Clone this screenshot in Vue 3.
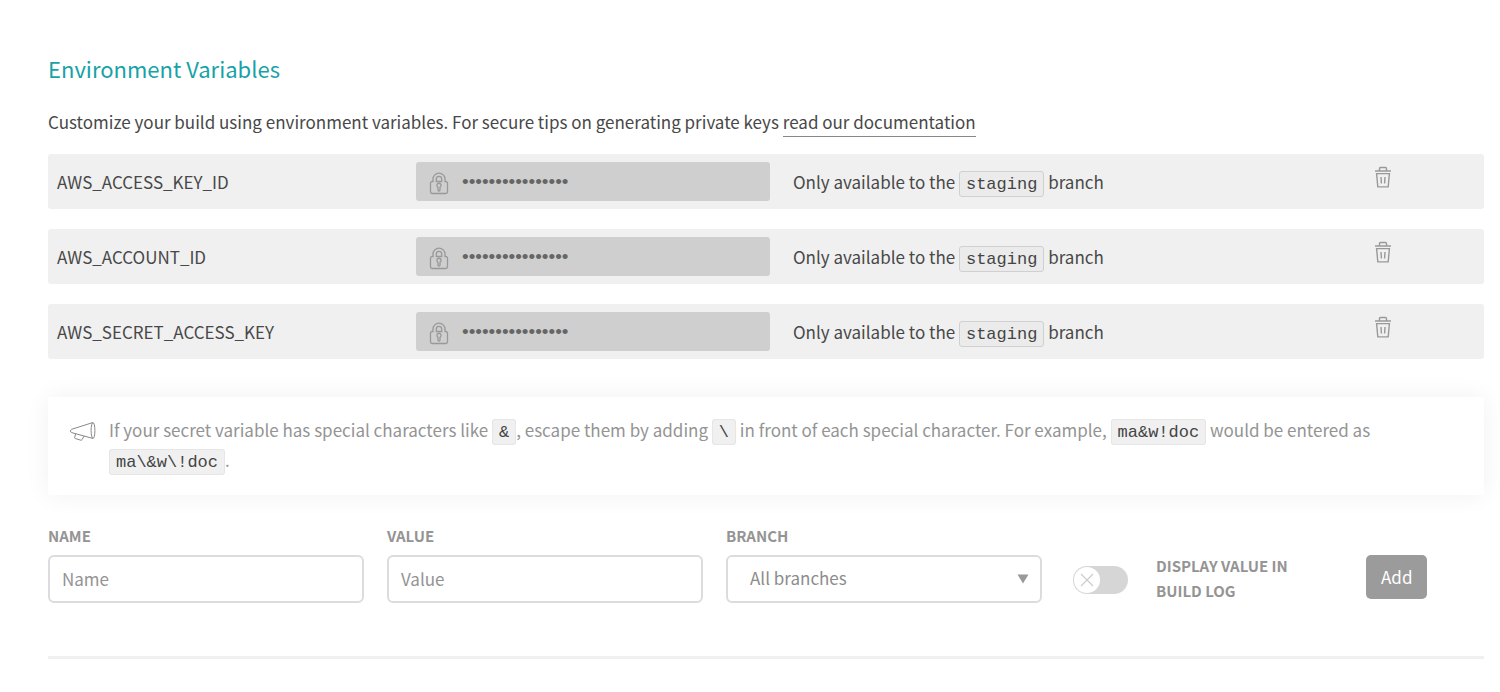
<script setup>
import { ref } from 'vue'

const variables = ref([
  { name: 'AWS_ACCESS_KEY_ID', branch: 'staging' },
  { name: 'AWS_ACCOUNT_ID', branch: 'staging' },
  { name: 'AWS_SECRET_ACCESS_KEY', branch: 'staging' },
])
const masked = 'x'.repeat(16)
const name = ref('')
const value = ref('')
const branch = ref('all')
const display = ref(false)

function remove(index) {
  variables.value.splice(index, 1)
}

function add() {
  if (!name.value) return
  variables.value.push({ name: name.value, branch: branch.value })
  name.value = ''
  value.value = ''
}
</script>

<template>
  <main class="settings">
    <h2>Environment Variables</h2>
    <p class="intro">
      Customize your build using environment variables. For secure tips on generating private keys
      <a href="#">read our documentation</a>
    </p>

    <ul class="variables">
      <li v-for="(item, index) in variables" :key="item.name">
        <span class="key">{{ item.name }}</span>
        <div class="secret">
          <svg width="20" height="24" viewBox="0 0 20 24" fill="none" stroke="#999" stroke-width="1.3">
            <path d="M4 9.500V7a6 5.800 0 0 1 12 0v2.500h.700a1.800 1.800 0 0 1 1.800 1.800v8.400a1.800 1.800 0 0 1-1.800 1.800H3.300a1.800 1.800 0 0 1-1.800-1.800v-8.400a1.800 1.800 0 0 1 1.800-1.800z" />
            <path d="M7.300 9.500V7a2.700 2.700 0 0 1 5.400 0v2.500z" />
            <path d="M9 15.200a2.100 2.100 0 1 1 2 0v2.800a1 1 0 0 1-2 0z" />
          </svg>
          <input type="password" :value="masked" :aria-label="item.name + ' value'" readonly />
        </div>
        <span class="scope">Only available to the <code>{{ item.branch }}</code> branch</span>
        <button class="remove" type="button" :aria-label="'Delete ' + item.name" @click="remove(index)">
          <svg width="18" height="22" viewBox="0 0 18 22" fill="none" stroke="#999" stroke-width="1.4">
            <path d="M1 5h16M5.500 5V2.500a1 1 0 0 1 1-1h5a1 1 0 0 1 1 1V5M2.600 7.600h12.800l-1.200 13.300H3.800zM7 11l.4 6.500M11 11l-.4 6.500" />
          </svg>
        </button>
      </li>
    </ul>

    <aside class="tip">
      <svg width="26" height="22" viewBox="0 0 26 22" fill="none" stroke="#888" stroke-width="1">
        <path d="M23 1.500 1.600 8.300Q.5 8.800.5 10q0 1.300 1.200 1.600L23 17.500" />
        <ellipse cx="23" cy="9.500" rx="1.900" ry="8" />
        <path d="m5.600 12.800-1 3.900q0 .6.700.8l5.500 1.700q.8.200 1.200-.5l2.200-3.800" />
      </svg>
      <p>
        If your secret variable has special characters like <code>&amp;</code>, escape them by adding
        <code>\</code> in front of each special character. For example, <code>ma&amp;w!doc</code> would be
        entered as <code>ma\&amp;w\!doc</code>.
      </p>
    </aside>

    <form @submit.prevent="add">
      <div class="field">
        <label for="name">NAME</label>
        <input id="name" v-model="name" type="text" placeholder="Name" />
      </div>
      <div class="field">
        <label for="value">VALUE</label>
        <input id="value" v-model="value" type="text" placeholder="Value" />
      </div>
      <div class="field">
        <label for="branch">BRANCH</label>
        <div class="picker">
          <select id="branch" v-model="branch">
            <option value="all">All branches</option>
            <option value="staging">staging</option>
          </select>
          <svg width="12" height="10" viewBox="0 0 12 10" fill="#999"><path d="M.500.500h11L6 9.500z" /></svg>
        </div>
      </div>
      <div class="toggle">
        <span class="switch">
          <input id="display" v-model="display" type="checkbox" />
          <span class="knob">
            <svg v-if="!display" width="14" height="14" viewBox="0 0 14 14" stroke="#ccc" stroke-width="1.200">
              <path d="m1 1 12 12M13 1 1 13" />
            </svg>
          </span>
        </span>
        <label for="display">DISPLAY VALUE IN BUILD LOG</label>
      </div>
      <button class="add" type="submit">Add</button>
    </form>
    <hr />
  </main>
</template>

<style>
body {
  margin: 0;
  background: #fff;
}
</style>

<style scoped>
* {
  box-sizing: border-box;
}

.settings {
  padding: 50px 16px 32px 48px;
  color: #484848;
  font: 17px/30px "Noto Sans CJK SC", "Open Sans", sans-serif;
}

input,
select,
button {
  margin: 0;
  font: inherit;
}

h2 {
  margin: 0;
  color: #17a2a8;
  font-size: 22px;
  font-weight: 400;
  line-height: 36px;
}

.intro {
  margin: 21px 0 17px;
}

.intro a {
  display: inline-block;
  border-bottom: 1px solid #888;
  color: inherit;
  line-height: 28px;
  text-decoration: none;
}

.variables {
  display: flex;
  flex-direction: column;
  gap: 20px;
  margin: 0;
  padding: 0;
  list-style: none;
}

.variables li {
  display: grid;
  grid-template-columns: 359fr 354fr 577fr 137fr;
  align-items: center;
  padding: 8px 0 8px 9px;
  border-radius: 3px;
  background: #f0f0f0;
}

.secret {
  display: flex;
  align-items: center;
  height: 39px;
  padding: 0 13px;
  border-radius: 3px;
  background: #cfcfcf;
}

.secret svg {
  flex: none;
  margin-top: 5px;
}

.secret input {
  flex: 1;
  min-width: 0;
  padding: 0 0 0 13px;
  border: 0;
  outline: 0;
  background: none;
  color: #666;
  font: 19px/30px "Liberation Sans", sans-serif;
}

.scope {
  padding-left: 23px;
}

code {
  padding: 3px 6px 2px;
  border: 1px solid #d0d0d0;
  border-radius: 3px;
  background: #ebebeb;
  color: #444;
  font: 17px/20px "Liberation Mono", monospace;
}

.remove {
  display: flex;
  justify-self: start;
  padding: 0 0 9px 27px;
  border: 0;
  background: none;
}

.tip {
  display: flex;
  gap: 13px;
  margin-top: 38px;
  padding: 18px 90px 20px 22px;
  background: #fff;
  box-shadow: 0 0 24px rgba(0, 0, 0, 0.06);
  color: #949494;
}

.tip svg {
  flex: none;
  margin-top: 6px;
}

.tip p {
  margin: 0;
}

.tip code {
  border-color: #e6e6e6;
  background: #f0f0f0;
}

form {
  display: grid;
  grid-template-columns: 316fr 316fr 316fr 278fr 118fr;
  align-items: end;
  gap: 23px;
  margin-top: 28px;
}

.field {
  display: flex;
  flex-direction: column;
  gap: 7px;
}

label {
  color: #949494;
  font-size: 15px;
  font-weight: 700;
  line-height: 25px;
}

.field input,
select {
  width: 100%;
  height: 48px;
  padding: 0 12px 2px;
  border: 2px solid #dcdcdc;
  border-radius: 6px;
  background: #fff;
  color: #8c8c8c;
}

.field input::placeholder {
  color: #949494;
  opacity: 1;
}

.picker {
  position: relative;
}

select {
  padding: 0 40px 2px 22px;
  appearance: none;
}

.picker svg {
  position: absolute;
  top: 19px;
  right: 13px;
  pointer-events: none;
}

.toggle {
  display: flex;
  align-items: center;
  gap: 28px;
  padding-left: 8px;
}

.toggle label {
  max-width: 150px;
}

.switch {
  position: relative;
  flex: none;
  display: flex;
  margin-top: 3px;
}

.switch input {
  width: 55px;
  height: 28px;
  border-radius: 14px;
  background: #d6d6d6;
  appearance: none;
}

.knob {
  position: absolute;
  top: 1px;
  left: 1px;
  display: grid;
  place-items: center;
  width: 26px;
  height: 26px;
  border-radius: 50%;
  background: #fff;
  pointer-events: none;
}

.switch input:checked + .knob {
  left: 28px;
}

.add {
  justify-self: start;
  height: 44px;
  margin-bottom: 4px;
  padding: 0 15px;
  border: 0;
  border-radius: 5px;
  background: #9b9b9b;
  color: #fff;
}

hr {
  margin: 53px 0 0;
  border: 0;
  border-top: 3px solid #f0f0f0;
}
</style>
